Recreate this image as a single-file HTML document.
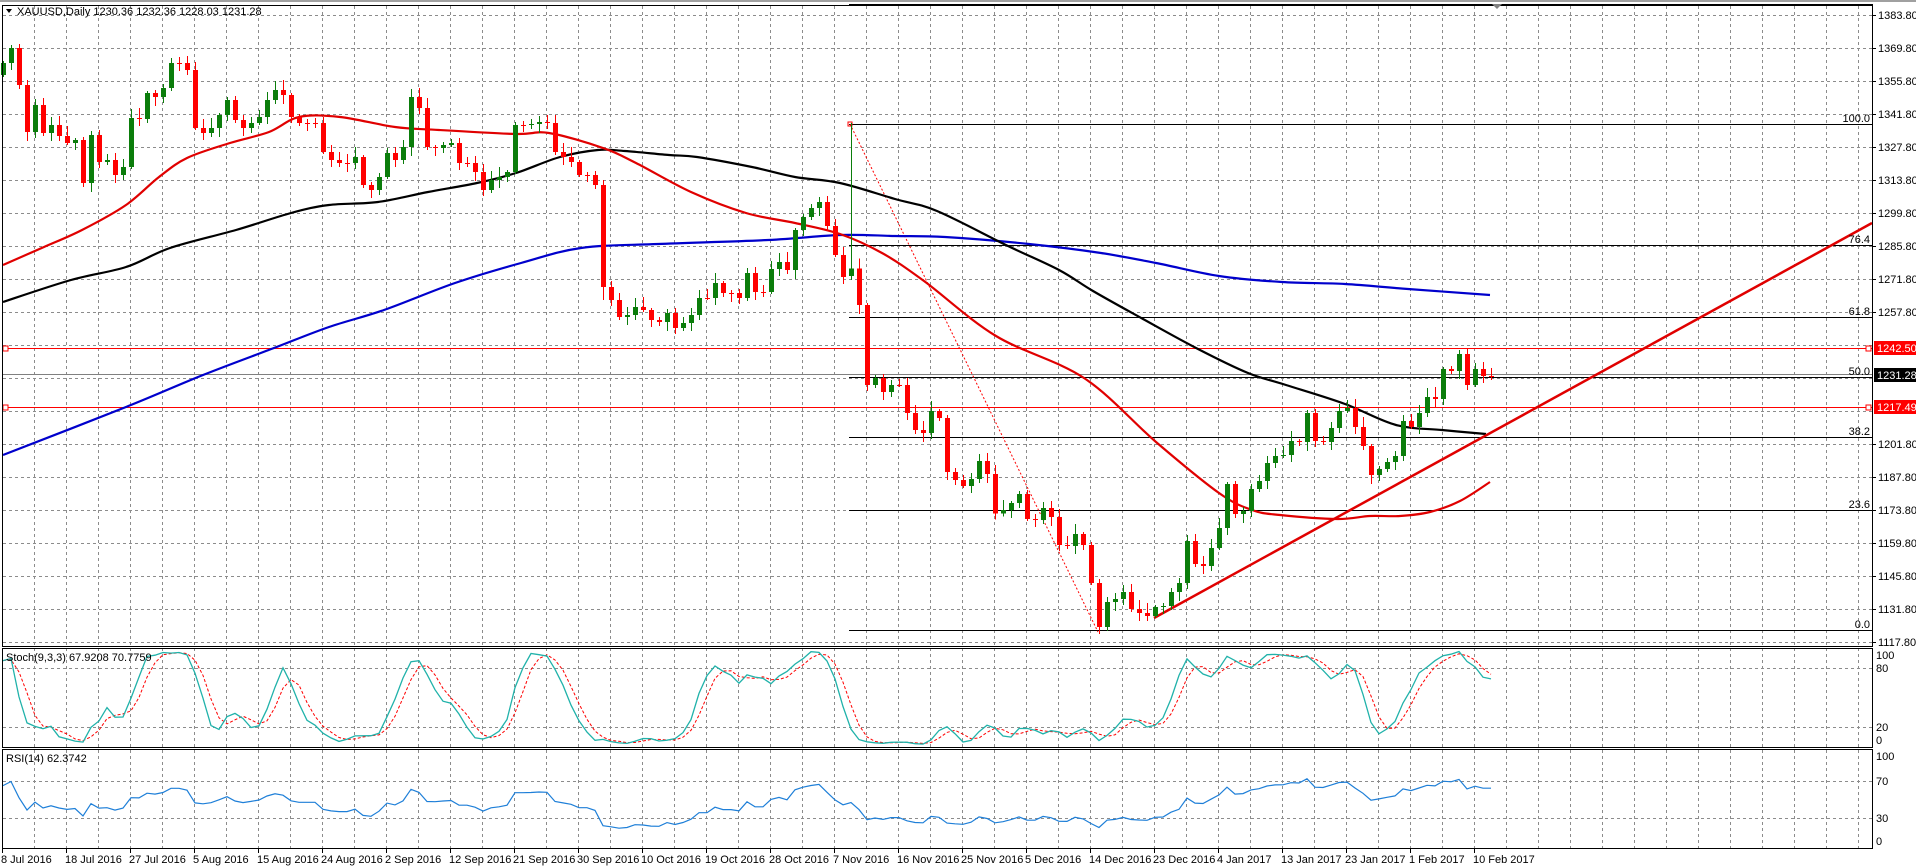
<!DOCTYPE html>
<html><head><meta charset="utf-8">
<style>
html,body{margin:0;padding:0;background:#fff;}
svg{display:block;font-family:"Liberation Sans",Tahoma,sans-serif;}
</style></head>
<body>
<svg id="s" width="1916" height="868" viewBox="0 0 1916 868" xmlns="http://www.w3.org/2000/svg">
<rect x="0" y="0" width="1916" height="868" fill="#fff"/>
<line x1="0" y1="1" x2="1916" y2="1" stroke="#a0a0a0" stroke-width="2"/>
<g id="grid" stroke="#8c8c8c" stroke-width="1" stroke-dasharray="3,3" shape-rendering="crispEdges"></g>
<g id="lines"></g>
<g id="candles" shape-rendering="crispEdges"></g>
<g id="ind"></g>
<g fill="none" stroke="#000" stroke-width="1" shape-rendering="crispEdges">
<rect x="2.5" y="5.5" width="1870" height="641"/>
<rect x="2.5" y="648.5" width="1870" height="99"/>
<rect x="2.5" y="749.5" width="1870" height="99"/>
</g>
<line x1="849" y1="5" x2="1873" y2="5" stroke="#000" stroke-width="2"/>
<polygon points="1492,4 1502,4 1497,9" fill="#808080"/>
<polygon points="6,9 12,9 9,13" fill="#000"/>
<text x="17" y="15" font-size="11" fill="#000">XAUUSD,Daily  1230.36 1232.36 1228.03 1231.28</text>
<text x="6" y="661" font-size="11" fill="#000">Stoch(9,3,3) 67.9208 70.7759</text>
<text x="6" y="762" font-size="11" fill="#000">RSI(14) 62.3742</text>
<g font-size="11" fill="#000" id="axis"></g>
<g font-size="11" fill="#000" text-anchor="end">
<text x="1870" y="122">100.0</text>
<text x="1870" y="243">76.4</text>
<text x="1870" y="315">61.8</text>
<text x="1870" y="375">50.0</text>
<text x="1870" y="435">38.2</text>
<text x="1870" y="508">23.6</text>
<text x="1870" y="628">0.0</text>
</g>
<rect x="1874" y="341" width="42" height="14" fill="#ff0000"/>
<text x="1877" y="352" font-size="11" fill="#fff">1242.50</text>
<rect x="1874" y="368" width="42" height="14" fill="#000"/>
<text x="1877" y="379" font-size="11" fill="#fff">1231.28</text>
<rect x="1874" y="400" width="42" height="14" fill="#ff0000"/>
<text x="1877" y="411" font-size="11" fill="#fff">1217.49</text>
<g font-size="11" fill="#000">
<text x="1876" y="659">100</text><text x="1876" y="672">80</text>
<text x="1876" y="731">20</text><text x="1876" y="744">0</text>
<text x="1876" y="760">100</text><text x="1876" y="785">70</text>
<text x="1876" y="822">30</text><text x="1876" y="845">0</text>
</g>
<g id="dates" font-size="11" fill="#000"></g>
</svg>
<script>
(function(){
function h(id,s){document.getElementById(id).insertAdjacentHTML('beforeend',s);}
var g='';
for(var k=1;k<=58;k++){var x=2.5+32*k;g+='<line x1="'+x+'" y1="6" x2="'+x+'" y2="848"/>';}
for(var k=0;k<=19;k++){var y=15.5+33*k;g+='<line x1="3" y1="'+y+'" x2="1872" y2="'+y+'"/>';}
[668.5,727.5,781.5,818.5].forEach(function(y){g+='<line x1="3" y1="'+y+'" x2="1872" y2="'+y+'"/>';});
h('grid',g);
var a='';
for(var k=0;k<=19;k++){var p=(1383.8-14*k).toFixed(2);var y=15+33*k;
 if(Math.abs(y-348)<10||Math.abs(y-375)<10||Math.abs(y-407)<10)continue;
 a+='<line x1="1873" y1="'+(y+.5)+'" x2="1876" y2="'+(y+.5)+'" stroke="#000"/><text x="1878" y="'+(y+4)+'">'+p+'</text>';}
h('axis',a);
var d=["8 Jul 2016","18 Jul 2016","27 Jul 2016","5 Aug 2016","15 Aug 2016","24 Aug 2016","2 Sep 2016","12 Sep 2016","21 Sep 2016","30 Sep 2016","10 Oct 2016","19 Oct 2016","28 Oct 2016","7 Nov 2016","16 Nov 2016","25 Nov 2016","5 Dec 2016","14 Dec 2016","23 Dec 2016","4 Jan 2017","13 Jan 2017","23 Jan 2017","1 Feb 2017","10 Feb 2017"];
var ds='';
d.forEach(function(t,i){var x=2+64*i;ds+='<line x1="'+(x+.5)+'" y1="849" x2="'+(x+.5)+'" y2="853" stroke="#000"/><text x="'+(x-1)+'" y="863">'+t+'</text>';});
h('dates',ds);
var C=[63,48,85,132,105,133,125,136,143,140,183,135,162,160,175,167,118,119,93,97,88,63,63,70,128,133,128,115,100,120,128,123,117,100,90,95,117,123,123,123,152,160,163,163,157,185,190,177,153,160,147,97,108,147,148,145,143,163,163,172,190,180,177,172,125,125,124,122,123,152,157,162,175,175,185,287,300,317,315,307,310,320,322,313,328,323,315,298,298,283,293,293,298,273,292,292,269,262,270,230,217,208,202,226,255,277,
268.6,305,385,378,392,385,385,413,430,433,411,418,472,480,486,479,461,474,513.6,510,503,494,519,520,508,517,545,546,534,545,583,627,602,599,592,609,613,616,607,606,592,583,541,564,566,548,528,484,514,511,489,481,463,456,455,441,442,413,441,442,428,411,408,427,446,475,469,462,456,421,427,413,397,399,369,371,354,385,369,376,376];
var N=C.length,H=[],L=[],cs='';
for(var i=0;i<N;i++){
 var o=i?C[i-1]:75,c=C[i];
 if(i==106)o=276;
 var r1=2+((i*37)%9),r2=2+((i*53)%8);
 var hi=Math.min(o,c)-r1,lo=Math.max(o,c)+r2;
 if(i==106)hi=123;
 if(i==75)lo=300;
 H.push(hi);L.push(lo);
 var x=3+8*i,col=(c<o)?'#0b7d0b':'#ff0000';
 var top=Math.min(o,c),bh=Math.max(1,Math.abs(o-c));
 cs+='<line x1="'+(x+.5)+'" y1="'+hi+'" x2="'+(x+.5)+'" y2="'+lo+'" stroke="'+col+'"/>';
 cs+='<rect x="'+(x-2)+'" y="'+top+'" width="5" height="'+bh+'" fill="'+col+'"/>';
}
h('candles',cs);
function pl(pts,col,w,extra){return '<polyline fill="none" stroke="'+col+'" stroke-width="'+w+'" '+(extra||'')+' points="'+pts.map(function(p){return p[0]+','+p[1]}).join(' ')+'"/>';}
function sm(pts,col,w){var s='M'+pts[0][0]+','+pts[0][1];
 for(var i=0;i<pts.length-1;i++){var p0=pts[i-1]||pts[i],p1=pts[i],p2=pts[i+1],p3=pts[i+2]||p2;
  s+=' C'+(p1[0]+(p2[0]-p0[0])/6).toFixed(1)+','+(p1[1]+(p2[1]-p0[1])/6).toFixed(1)+' '+(p2[0]-(p3[0]-p1[0])/6).toFixed(1)+','+(p2[1]-(p3[1]-p1[1])/6).toFixed(1)+' '+p2[0]+','+p2[1];}
 return '<path fill="none" stroke="'+col+'" stroke-width="'+w+'" d="'+s+'"/>';}
var red=[[3,265],[44,247],[82,230],[126,205],[159,177],[187,158],[230,143],[269,132],[299,117],[340,117],[395,127],[439,130],[516,134],[549,133],[603,148],[636,163],[691,192],[746,213],[795,223],[840,234],[882,253],[924,281],[996,336],[1084,378],[1156,442],[1219,493],[1252,510],[1280,515],[1337,519],[1370,516],[1400,516],[1430,512],[1460,501],[1490,482]];
var blk=[[3,302],[71,280],[126,267],[170,248],[236,230],[291,213],[329,205],[378,202],[428,192],[477,183],[516,173],[560,157],[598,150],[625,151],[669,155],[697,157],[752,167],[795,177],[840,183],[895,199],[937,211],[1008,246],[1059,270],[1093,291],[1143,319],[1198,349],[1248,373],[1286,385],[1345,404],[1396,425],[1442,430],[1486,434]];
var blu=[[3,455],[126,407],[203,375],[274,348],[329,327],[384,310],[455,283],[521,263],[581,248],[658,244],[768,240],[840,235],[895,236],[945,237],[1029,244],[1101,253],[1156,263],[1219,276],[1282,282],[1345,284],[1408,289],[1490,295]];
var ls='';
ls+='<line x1="3" y1="348.5" x2="1872" y2="348.5" stroke="#ff0000"/>';
ls+='<line x1="3" y1="407.5" x2="1872" y2="407.5" stroke="#ff0000"/>';
ls+='<rect x="3" y="346" width="5" height="5" fill="#fff" stroke="#ff0000"/><rect x="1866" y="346" width="5" height="5" fill="#fff" stroke="#ff0000"/>';
ls+='<rect x="3" y="405" width="5" height="5" fill="#fff" stroke="#ff0000"/><rect x="1866" y="405" width="5" height="5" fill="#fff" stroke="#ff0000"/>';
ls+='<line x1="3" y1="374.5" x2="1872" y2="374.5" stroke="#808080"/>';
[124.5,245.5,317.5,377.5,437.5,510.5,630.5].forEach(function(y){ls+='<line x1="849" y1="'+y+'" x2="1872" y2="'+y+'" stroke="#000"/>';});
ls+='<line x1="850" y1="124" x2="1098" y2="632" stroke="#ff0000" stroke-dasharray="2,2"/>';
ls+='<rect x="848" y="122" width="4" height="4" fill="none" stroke="#ff0000"/>';
ls+=sm(blu,'#0000cc',2.2)+sm(blk,'#000',2.2)+sm(red,'#e00000',2.2);
ls+='<line x1="1154" y1="618" x2="1872" y2="223" stroke="#e00000" stroke-width="2.5"/>';
h('lines',ls);
var K=[],D=[],raw=[];
for(var i=0;i<N;i++){
 var s=Math.max(0,i-8),hh=1e9,ll=-1e9;
 for(var j=s;j<=i;j++){hh=Math.min(hh,H[j]);ll=Math.max(ll,L[j]);}
 raw.push([ll-C[i],ll-hh]);
 var n2=0,d2=0;for(var j=Math.max(0,i-2);j<=i;j++){n2+=raw[j][0];d2+=raw[j][1];}
 K.push(d2>0?100*n2/d2:50);
 var sm2=0,c3=0;for(var j=Math.max(0,i-2);j<=i;j++){sm2+=K[j];c3++;}
 D.push(sm2/c3);
}
var kp=[],dp=[];
for(var i=0;i<N;i++){var x=3+8*i;kp.push([x,(746.6-0.983*K[i]).toFixed(1)]);dp.push([x,(746.6-0.983*D[i]).toFixed(1)]);}
var is=pl(dp,'#ff0000',1,'stroke-dasharray="3,2"')+pl(kp,'#20b2aa',1.3);
var ag=2.2,al=1.2,rp=[],per=14;
rp.push([3,(846-0.933*64.7).toFixed(1)]);
for(var i=1;i<N;i++){
 var ch=(C[i-1]-C[i])/2.357,gn=Math.max(ch,0),lo2=Math.max(-ch,0);
 ag=(ag*(per-1)+gn)/per;al=(al*(per-1)+lo2)/per;
 var r=al==0?100:100-100/(1+ag/al);
 rp.push([3+8*i,(846-0.933*r).toFixed(1)]);
}
is+=pl(rp,'#1e7fd8',1.2);
h('ind',is);
})();
</script>
</body></html>
